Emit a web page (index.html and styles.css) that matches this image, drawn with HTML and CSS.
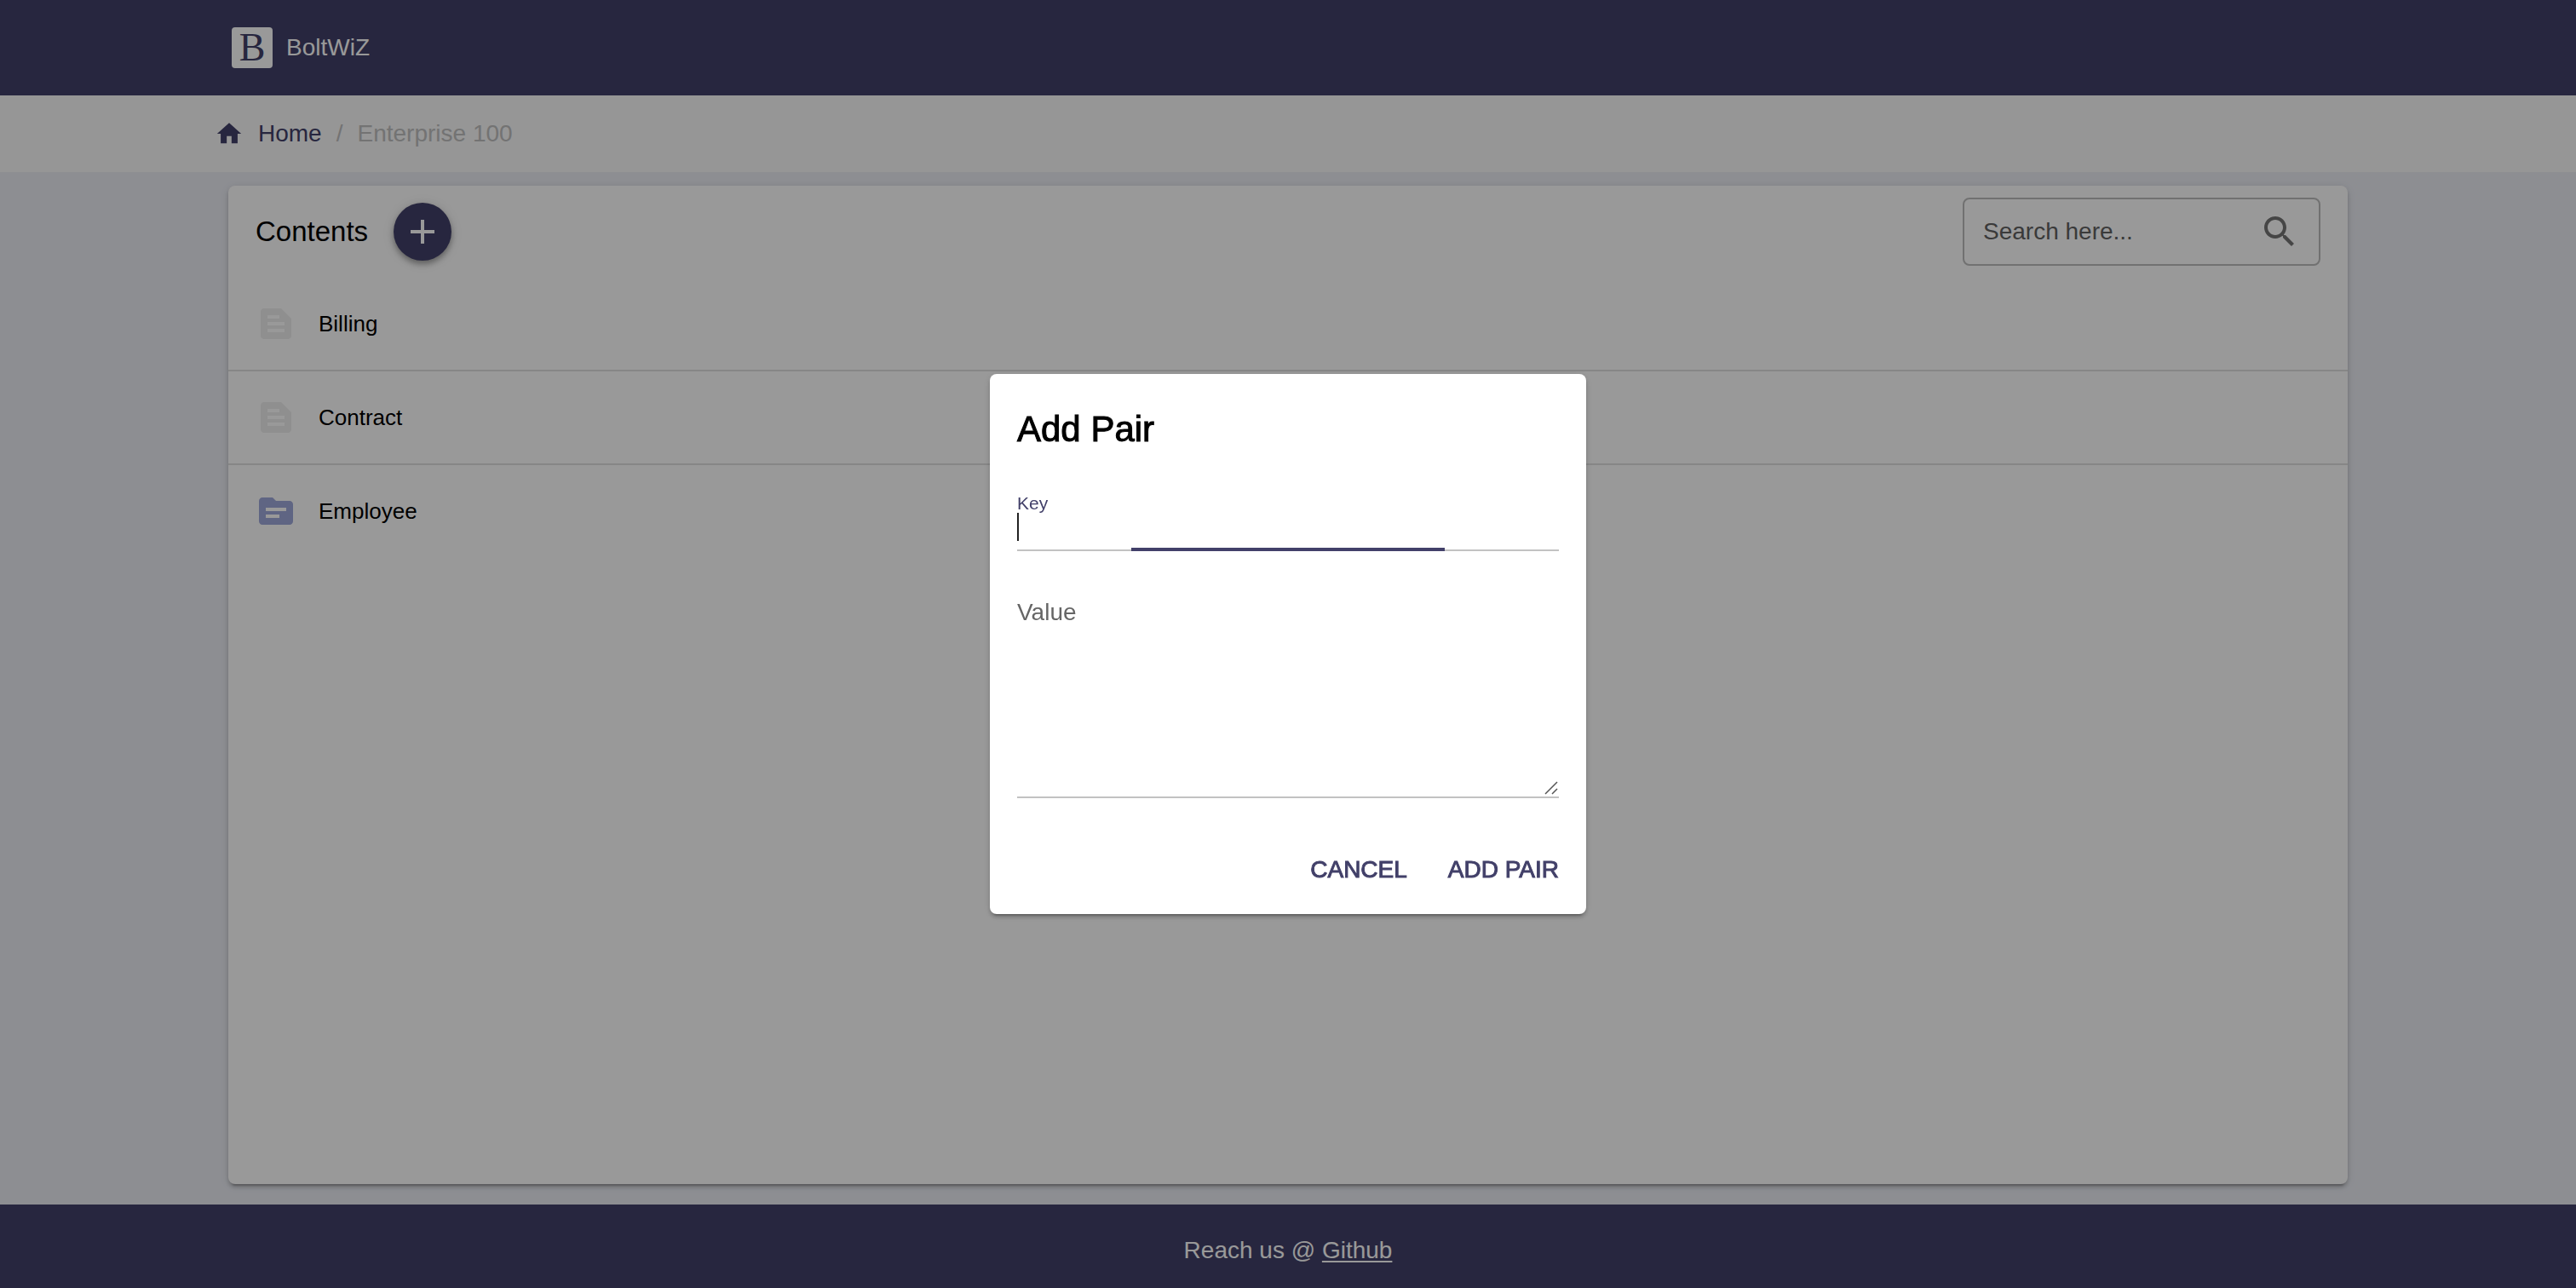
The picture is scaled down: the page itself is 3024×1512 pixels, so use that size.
FILE: index.html
```html
<!DOCTYPE html>
<html lang="en">
<head>
<meta charset="utf-8">
<title>BoltWiZ</title>
<link rel="stylesheet" href="styles.css">
</head>
<body>
<header class="topbar">
  <div class="container brand">
    <span class="brand-mark">B</span>
    <span class="brand-name">BoltWiZ</span>
  </div>
</header>

<nav class="crumbs" aria-label="Breadcrumb">
  <div class="container crumbs-inner">
    <svg class="home-icon" viewBox="0 0 24 24" aria-hidden="true"><path d="M10 20v-6h4v6h5v-8h3L12 3 2 12h3v8z"/></svg>
    <a class="crumb-link" href="#">Home</a>
    <span class="crumb-muted">/</span>
    <span class="crumb-muted">Enterprise 100</span>
  </div>
</nav>

<main class="container card">
  <div class="card-head">
    <h1 class="card-title">Contents</h1>
    <button class="fab" type="button" aria-label="Add">
      <svg class="icon" viewBox="0 0 24 24"><path d="M19 13h-6v6h-2v-6H5v-2h6V5h2v6h6v2z"/></svg>
    </button>
    <div class="search">
      <input class="search-input" type="text" placeholder="Search here..." aria-label="Search">
      <svg class="icon search-icon" viewBox="0 0 24 24" aria-hidden="true"><path d="M15.5 14h-.79l-.28-.27C15.41 12.59 16 11.11 16 9.5 16 5.91 13.09 3 9.5 3S3 5.91 3 9.5 5.91 16 9.5 16c1.61 0 3.09-.59 4.23-1.57l.27.28v.79l5 4.99L20.49 19l-4.99-5zm-6 0C7.01 14 5 11.99 5 9.5S7.01 5 9.5 5 14 7.01 14 9.5 11.99 14 9.5 14z"/></svg>
    </div>
  </div>
  <ul class="list">
    <li class="list-item">
      <svg class="icon file-icon" viewBox="0 0 24 24" aria-hidden="true"><path d="M15 3H5c-1.100 0-2 .9-2 2v14c0 1.100.9 2 2 2h14c1.100 0 2-.9 2-2V9l-6-6zM7 7h7v2H7V7zm10 10H7v-2h10v2zm0-4H7v-2h10v2z"/></svg>
      Billing
    </li>
    <li class="list-item">
      <svg class="icon file-icon" viewBox="0 0 24 24" aria-hidden="true"><path d="M15 3H5c-1.100 0-2 .9-2 2v14c0 1.100.9 2 2 2h14c1.100 0 2-.9 2-2V9l-6-6zM7 7h7v2H7V7zm10 10H7v-2h10v2zm0-4H7v-2h10v2z"/></svg>
      Contract
    </li>
    <li class="list-item">
      <svg class="icon folder-icon" viewBox="0 0 24 24" aria-hidden="true"><path d="M20 6h-8l-2-2H4c-1.100 0-1.990.9-1.990 2L2 18c0 1.100.9 2 2 2h16c1.100 0 2-.9 2-2V8c0-1.100-.9-2-2-2zm-6 10H6v-2h8v2zm4-4H6v-2h12v2z"/></svg>
      Employee
    </li>
  </ul>
</main>

<footer class="footer">
  <p class="footer-text">Reach us @ <a class="footer-link" href="#">Github</a></p>
</footer>

<div class="scrim">
  <form class="dialog" role="dialog" aria-labelledby="dialog-title">
    <h2 class="dialog-title" id="dialog-title">Add Pair</h2>
    <div class="field">
      <label class="label-small" for="key">Key</label>
      <input class="key-input" id="key" type="text">
      <span class="caret"></span>
      <span class="ripple"></span>
    </div>
    <div class="field field-value">
      <label class="label" for="value">Value</label>
      <textarea class="value-input" id="value"></textarea>
      <svg class="grip" viewBox="0 0 16 16" aria-hidden="true"><path d="M1 15 15 1M9 15l6-6"/></svg>
    </div>
    <div class="actions">
      <button class="text-button" type="button">CANCEL</button>
      <button class="text-button" type="button">ADD PAIR</button>
    </div>
  </form>
</div>
</body>
</html>
```
FILE: styles.css
```css
:root {
  --primary: #424069;
  --shadow: 0 6px 2px -4px rgba(0, 0, 0, .2), 0 4px 4px rgba(0, 0, 0, .14), 0 2px 10px rgba(0, 0, 0, .12);
}

* {
  box-sizing: border-box;
}

body {
  display: flex;
  flex-direction: column;
  min-height: 100vh;
  margin: 0;
  background: #ebedf4;
  color: #000;
  font: 28px/32px "Liberation Sans", Arial, sans-serif;
}

h1, h2, p, ul {
  margin: 0;
  padding: 0;
}

button, input, textarea {
  font: inherit;
}

.container {
  width: calc(100% - 64px);
  max-width: 2488px;
  margin: 0 auto;
}

.icon {
  flex: none;
  width: 48px;
  height: 48px;
  fill: currentColor;
}

/* Top bar */
.topbar {
  display: flex;
  height: 112px;
  background: var(--primary);
  color: #fff;
}

.brand {
  display: flex;
  align-items: center;
  gap: 16px;
  padding-left: 4px;
}

.brand-mark {
  width: 48px;
  height: 48px;
  border-radius: 4px;
  background: #fff;
  color: var(--primary);
  font: 46px/48px "Liberation Serif", serif;
  text-align: center;
}

/* Breadcrumbs */
.crumbs {
  display: flex;
  height: 90px;
  background: #fafafa;
}

.crumbs-inner {
  display: flex;
  align-items: center;
  gap: 17px;
}

.home-icon {
  width: 34px;
  height: 34px;
  margin-left: -16px;
  fill: var(--primary);
}

.crumb-link {
  color: var(--primary);
  text-decoration: none;
}

.crumb-muted {
  color: #c0c0c0;
}

/* Contents card */
.card {
  flex: 1;
  margin: 16px auto 24px;
  border-radius: 8px;
  background: #fff;
  box-shadow: var(--shadow);
}

.card-head {
  display: flex;
  align-items: center;
  height: 108px;
  padding: 0 32px;
}

.card-title {
  font-size: 33px;
  font-weight: 400;
}

.fab {
  display: flex;
  align-items: center;
  justify-content: center;
  width: 68px;
  height: 68px;
  margin-left: 30px;
  padding: 0;
  border: 0;
  border-radius: 50%;
  background: var(--primary);
  color: #fff;
  box-shadow: 0 4px 6px rgba(0, 0, 0, .3), 0 2px 14px rgba(0, 0, 0, .14);
}

.search {
  display: flex;
  align-items: center;
  width: 420px;
  height: 80px;
  margin-left: auto;
  padding: 0 22px;
  border: 2px solid #bdbdbd;
  border-radius: 8px;
}

.search-input {
  flex: 1;
  min-width: 0;
  padding: 0;
  border: 0;
  background: none;
  outline: 0;
}

.search-input::placeholder {
  color: #616161;
  opacity: 1;
}

.search-icon {
  margin-left: 8px;
  color: #757575;
}

.list {
  list-style: none;
}

.list-item {
  display: flex;
  align-items: center;
  gap: 26px;
  height: 110px;
  padding: 0 32px;
  border-bottom: 2px solid #e0e0e0;
  font-size: 26px;
}

.list-item:last-child {
  border-bottom-color: transparent;
}

.file-icon {
  color: #eee;
}

.folder-icon {
  color: #9fa8da;
}

/* Footer */
.footer {
  padding: 38px 32px 28px;
  background: var(--primary);
  color: #fff;
  text-align: center;
}

.footer-link {
  color: inherit;
  text-decoration-thickness: 2px;
  text-underline-offset: 3px;
}

/* Dialog */
.scrim {
  position: fixed;
  inset: 0;
  display: flex;
  align-items: center;
  justify-content: center;
  background: rgba(0, 0, 0, .4);
}

.dialog {
  width: 700px;
  padding: 40px 32px 36px;
  border-radius: 8px;
  background: #fff;
  box-shadow: var(--shadow);
}

.dialog-title {
  margin-bottom: 50px;
  font-size: 42px;
  font-weight: 400;
  line-height: 50px;
  -webkit-text-stroke: 1px #000;
}

.field {
  position: relative;
  display: flex;
  flex-direction: column;
}

.field-value {
  margin-top: 56px;
}

.label-small {
  color: var(--primary);
  font-size: 21px;
  line-height: 24px;
}

.label {
  color: #666;
}

.key-input,
.value-input {
  padding: 0;
  border: 0;
  border-bottom: 2px solid #c2c2c2;
  border-radius: 0;
  outline: 0;
  background: none;
}

.key-input {
  height: 44px;
}

.value-input {
  height: 202px;
  resize: none;
}

.caret {
  position: absolute;
  left: 0;
  bottom: 12px;
  width: 2px;
  height: 33px;
  background: #222;
}

.ripple {
  position: absolute;
  bottom: 0;
  left: 21%;
  right: 21%;
  height: 4px;
  background: var(--primary);
}

.grip {
  position: absolute;
  right: 1px;
  bottom: 4px;
  width: 16px;
  height: 16px;
  fill: none;
  stroke: #555;
  stroke-width: 1.5;
}

.actions {
  display: flex;
  justify-content: flex-end;
  gap: 48px;
  margin-top: 68px;
}

.text-button {
  padding: 0;
  border: 0;
  background: none;
  color: var(--primary);
  -webkit-text-stroke: 1px var(--primary);
}
```
